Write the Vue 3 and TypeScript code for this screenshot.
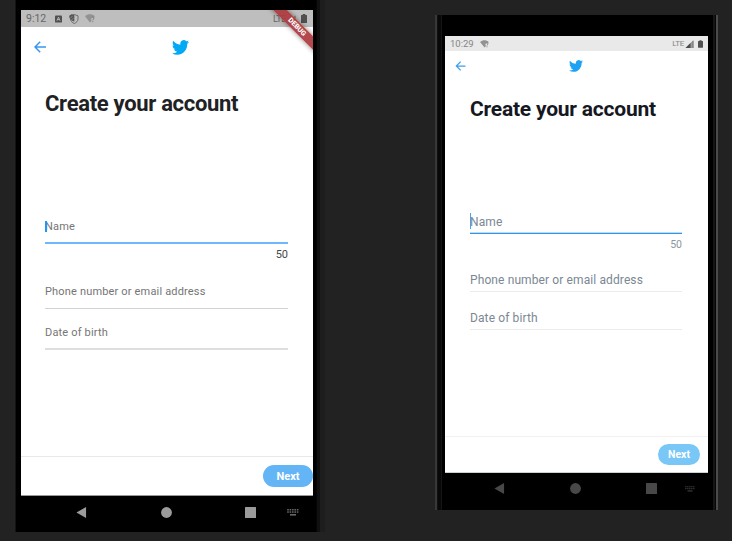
<script setup lang="ts">
interface Phone {
  id: string
  time: string
  shield: boolean
  debug: boolean
}

const phones: Phone[] = [
  { id: 'large', time: '9:12', shield: true, debug: true },
  { id: 'small', time: '10:29', shield: false, debug: false },
]

const keys = [0, 1, 2, 3, 4]
</script>

<template>
  <main class="stage">
    <section v-for="p in phones" :key="p.id" class="phone" :class="p.id">
      <div class="screen">
        <div class="status">
          <span class="time">{{ p.time }}</span>
          <svg v-if="p.shield" class="app-icon" viewBox="0 0 8 8">
            <rect width="8" height="8" rx="1" fill="#505050" />
            <path d="M2.2 6 4 1.8 5.8 6M2.9 4.6h2.2" fill="none" stroke="#bdbdbd" stroke-width="1" />
          </svg>
          <svg v-if="p.shield" class="shield-icon" viewBox="0 0 10 10">
            <path d="M1 1.8 5.2.5 9 1.8v3C9 7 7.300 8.800 5.300 9.500 3.300 8.800 1.500 7 1.500 4.800Z" fill="none" stroke="#646464" stroke-width=".9" />
            <path d="M.3 1.800 2.500.3 5.300 1v6.500C3 7 1.200 5.500.6 4Z" fill="#555" />
            <path d="m1.500 3.600 2-1.200M2.500 5.800l2-1.500" stroke="#aaa" stroke-width=".6" />
          </svg>
          <svg class="wifi" viewBox="0 0 10 9">
            <path d="M0 2.200C3-.4 7-.4 9.800 2.200L9 3.500 7 3 6 4.500 6.500 7 5 8.500Z" fill="#929292" />
            <path d="M6.700 4.200c0-1.500 2.300-1.400 2.200 0 0 1-1.100 1-1.100 2.100M7.800 7.200v1" fill="none" stroke="#747474" stroke-width=".9" />
          </svg>
          <span class="grow"></span>
          <span class="lte">LTE</span>
          <svg class="signal" viewBox="0 0 8 8">
            <path d="M0 8 8 0v8Z" fill="#999" />
            <path d="M0 8 5 3v5Z" fill="#4c4c4c" />
            <path d="M7.500 1v7" stroke="#666" stroke-width=".7" />
          </svg>
          <svg class="battery" viewBox="0 0 6 9">
            <path d="M1.700 0h2.600v1H5.500q.5 0 .5.500v7q0 .5-.5.500h-5Q0 9 0 8.500v-7Q0 1 .5 1h1.200Z" fill="#505050" />
          </svg>
        </div>

        <header class="bar">
          <svg class="back" viewBox="0 0 12 12">
            <path d="M12 6H1M6.200.7 1 6l5.200 5.300" fill="none" stroke="currentColor" stroke-width="1.500" />
          </svg>
          <svg class="bird" viewBox="0 2 24 20" preserveAspectRatio="none">
            <path d="M23.953 4.570a10 10 0 0 1-2.825.775 4.958 4.958 0 0 0 2.163-2.723c-.951.555-2.005.959-3.127 1.184a4.920 4.920 0 0 0-8.384 4.482C7.690 8.095 4.067 6.130 1.640 3.162a4.822 4.822 0 0 0-.666 2.475c0 1.710.870 3.213 2.188 4.096a4.904 4.904 0 0 1-2.228-.616v.060a4.923 4.923 0 0 0 3.946 4.827 4.996 4.996 0 0 1-2.212.085 4.936 4.936 0 0 0 4.604 3.417 9.867 9.867 0 0 1-6.102 2.105c-.390 0-.779-.023-1.170-.067a13.995 13.995 0 0 0 7.557 2.209c9.053 0 13.998-7.496 13.998-13.985 0-.210 0-.420-.015-.630A9.935 9.935 0 0 0 24 4.590Z" fill="currentColor" />
          </svg>
        </header>

        <h1>Create your account</h1>

        <form class="fields" @submit.prevent>
          <div class="field name"><i class="caret"></i><label>Name</label></div>
          <div class="count">50</div>
          <div class="field contact"><label>Phone number or email address</label></div>
          <div class="field birth"><label>Date of birth</label></div>
        </form>

        <footer class="footer"><button type="button">Next</button></footer>

        <div v-if="p.debug" class="debug">DEBUG</div>
      </div>

      <nav class="nav">
        <svg viewBox="0 0 11 12"><path d="M0 6 10.500 0v12Z" fill="currentColor" /></svg>
        <svg viewBox="0 0 11 11"><circle cx="5.500" cy="5.500" r="5.400" fill="currentColor" /></svg>
        <svg viewBox="0 0 11 11"><rect width="11" height="11" rx=".5" fill="currentColor" /></svg>
        <svg class="keyboard" viewBox="0 0 12 7">
          <template v-for="k in keys" :key="k">
            <rect :x="0.2 + k * 2.4" y="0" width="1.600" height="1.500" fill="currentColor" />
            <rect :x="0.2 + k * 2.4" y="2.300" width="1.600" height="1.500" fill="currentColor" />
          </template>
          <rect x="3" y="5" width="6" height="1.600" fill="currentColor" />
        </svg>
      </nav>
    </section>
  </main>
</template>

<style>
body {
  background: #222;
  overflow: hidden;
}
</style>

<style scoped>
.stage {
  display: flex;
  align-items: flex-start;
  gap: 115px;
  width: 732px;
  height: 541px;
  padding-left: 15px;
  box-sizing: border-box;
  background: #222;
  font-family: Roboto, sans-serif;
}
.phone {
  flex: none;
  box-sizing: border-box;
  display: flex;
  flex-direction: column;
  background: #000;
}
.phone.large {
  width: 305px;
  height: 532px;
  padding: 10px 7px 0 5px;
  border-left: 1px solid #141414;
  box-shadow: inset -3px 0 #101010, inset -4px 0 #050505, 5px 0 #1d1d1d;
}
.phone.small {
  width: 283px;
  height: 495px;
  margin-top: 15px;
  padding: 21px 8px 0;
  border-left: 2px solid #383838;
  border-right: 2px solid #4b4b4b;
  box-shadow: inset 1px 0 #111, inset 4px 0 #080808, inset 5px 0 #151515, inset -1px 0 #050505, inset -3px 0 #151515;
}
.screen {
  position: relative;
  overflow: hidden;
  display: flex;
  flex-direction: column;
  flex: none;
  box-sizing: border-box;
  background: #fff;
}
.large .screen { height: 486px; border-bottom: 1px solid #999; }
.small .screen { height: 437px; border-bottom: 1px solid #ccd2d2; }
svg { display: block; flex: none; }

.status {
  display: flex;
  align-items: center;
  flex: none;
  color: #666;
}
.large .status { height: 17px; background: #bebebe; padding: 0 6px 0 5px; font-size: 10.500px; }
.small .status { height: 15px; background: #e9e9e9; padding: 0 5px; font-size: 9.500px; color: #858585; }
.large .time { width: 20px; }
.small .time { width: 23px; }
.grow { flex: 1; }
.app-icon { width: 7px; height: 8px; margin-left: 9px; }
.shield-icon { width: 10px; height: 10px; margin-left: 7px; }
.wifi { width: 10px; height: 9px; margin-left: 6px; }
.small .wifi { width: 9px; height: 8px; margin-left: 7px; }
.lte { font-size: 9px; letter-spacing: -.4px; }
.small .lte { font-size: 8px; letter-spacing: -.3px; }
.signal { width: 9px; height: 8px; margin-left: 1px; }
.battery { width: 6px; height: 9px; margin-left: 5px; }
.small .battery { width: 5px; height: 8px; margin-left: 4px; }

.bar {
  display: grid;
  grid-template-columns: 1fr auto 1fr;
  align-items: center;
  flex: none;
}
.large .bar { height: 40px; padding: 0 13px; color: #03a9f4; }
.small .bar { height: 30px; padding: 0 11px 0 10px; color: #1da1f2; }
.large .bar { grid-template-columns: 138px auto 1fr; }
.back { width: 12px; height: 12px; color: #3896ee; }
.small .back { width: 11px; height: 10px; color: #3b9fed; }
.bird { width: 17px; height: 15px; }
.small .bird { width: 14px; height: 12px; }

h1 {
  margin: 0;
  flex: none;
  font-weight: 700;
  white-space: nowrap;
}
.large h1 { height: 74px; line-height: 74px; padding-left: 24px; font-size: 22px; letter-spacing: -.31px; color: #202124; }
.small h1 { height: 56px; line-height: 56px; padding-left: 25px; font-size: 21px; letter-spacing: -.22px; color: #16181f; }

.fields { display: flex; flex-direction: column; flex: 1; }
.large .fields { padding: 69px 25px 0 24px; }
.small .fields { padding: 68px 26px 0 25px; }
.field {
  display: flex;
  align-items: center;
  box-sizing: border-box;
  position: relative;
  white-space: nowrap;
}
.large .field { font-size: 11px; letter-spacing: .17px; color: #757575; border-bottom: 1px solid #d3d3d3; }
.small .field { font-size: 12px; letter-spacing: .11px; color: #7b8794; border-bottom: 1px solid #ececec; }
.caret {
  position: absolute;
  left: 0;
  background: #2196f3;
  width: 1px;
}
.large .caret { height: 11px; top: 11px; width: 1.500px; }
.small .caret { height: 16px; top: 8px; background: #43a5ed; }
.large .name { height: 34px; border-bottom: 2px solid #6bb8fc; }
.small .name { height: 29px; padding-top: 5px; border-bottom: 1px solid #3196ed; box-shadow: inset 0 -1px #b9dcf9; }
.count { text-align: right; }
.large .count { height: 21px; line-height: 21px; font-size: 11px; color: #484848; }
.small .count { height: 22px; line-height: 22px; font-size: 10.500px; color: #8b96a1; }
.large .contact { height: 35px; margin-top: 9px; }
.large .birth { height: 34px; margin-top: 7px; border-bottom: 2px solid #dedede; }
.small .contact { height: 26px; margin-top: 10px; padding-top: 2px; }
.small .birth { height: 26px; margin-top: 12px; padding-top: 2px; }

.footer {
  display: flex;
  align-items: center;
  justify-content: flex-end;
  flex: none;
  box-sizing: border-box;
}
.large .footer { height: 39px; border-top: 1px solid #e9e9e9; }
.small .footer { height: 36px; border-top: 1px solid #f1f1f1; padding-right: 8px; }
button {
  border: 0;
  padding: 0;
  color: #fff;
  font-family: inherit;
  font-weight: 700;
}
.large button { width: 50px; height: 22px; border-radius: 11px; background: #64b5f6; font-size: 11px; }
.small button { width: 42px; height: 21px; border-radius: 11px; background: #78c7f7; font-size: 10.500px; }

.debug {
  position: absolute;
  left: 243px;
  top: 12px;
  width: 66px;
  height: 10px;
  transform: rotate(45deg);
  background: rgba(174, 58, 62, .92);
  color: #fff;
  font-size: 7px;
  font-weight: 800;
  line-height: 10px;
  text-align: center;
  box-shadow: 0 0 5px rgba(0, 0, 0, .45);
}

.nav {
  display: flex;
  align-items: center;
  box-sizing: border-box;
}
.nav svg { height: 11px; width: 11px; }
.large .nav { height: 33px; padding-left: 55px; color: #9b9b9b; }
.small .nav { height: 31px; padding-left: 49px; color: #484848; }
.large .nav svg + svg { margin-left: 73.500px; }
.small .nav svg + svg { margin-left: 65px; }
.large .nav .keyboard { width: 12px; height: 7px; margin-left: 31px !important; color: #666; }
.small .nav .keyboard { width: 10px; height: 6px; margin-left: 28px !important; color: #343434; }
</style>
